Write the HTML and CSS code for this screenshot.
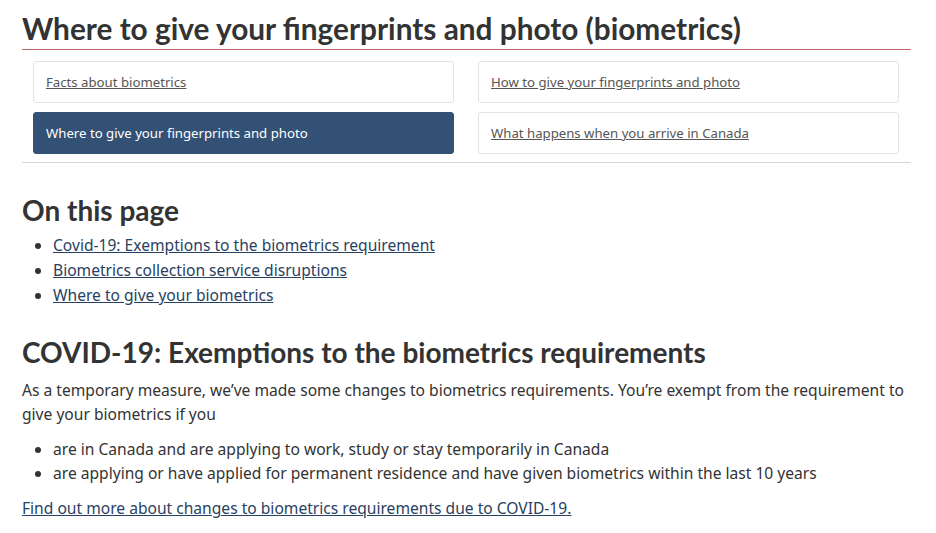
FILE: index.html
```html
<!DOCTYPE html>
<html lang="en">
  <head>
    <meta charset="UTF-8" />
    <meta name="viewport" content="width=device-width, initial-scale=1.0" />
    <title>Where to give your fingerprints and photo (biometrics)</title>
    <link rel="stylesheet" href="styles.css">
  </head>
  <body>
    <main class="container">
      <h1>Where to give your fingerprints and photo (biometrics)</h1>

      <nav class="sub-nav">
        <a href="#" class="nav-box">Facts about biometrics</a>
        <a href="#" class="nav-box">How to give your fingerprints and photo</a>
        <a href="#" class="nav-box active">Where to give your fingerprints and photo</a>
        <a href="#" class="nav-box">What happens when you arrive in Canada</a>
      </nav>

      <h2 class="toc-title">On this page</h2>
      <ul class="toc">
        <li><a href="#covid">Covid-19: Exemptions to the biometrics requirement</a></li>
        <li><a href="#disruptions">Biometrics collection service disruptions</a></li>
        <li><a href="#where">Where to give your biometrics</a></li>
      </ul>

      <h2 id="covid">COVID-19: Exemptions to the biometrics requirements</h2>
      <p>As a temporary measure, we’ve made some changes to biometrics requirements. You’re exempt from the requirement to give your biometrics if you</p>
      <ul class="plain-list">
        <li>are in Canada and are applying to work, study or stay temporarily in Canada</li>
        <li>are applying or have applied for permanent residence and have given biometrics within the last 10 years</li>
      </ul>
      <p><a href="#">Find out more about changes to biometrics requirements due to COVID-19.</a></p>
    </main>
  </body>
</html>
```

FILE: styles.css
```css
body {
  font-family: "Noto Sans", "Open Sans", sans-serif;
  margin: 0;
  padding: 0;
  background-color: #fff;
  color: #333;
}
.container {
  width: 889px;
  margin-left: 22px;
}
h1,
h2 {
  font-family: Lato, "Noto Sans", sans-serif;
  font-weight: 700;
  color: #333;
  margin: 0;
}
h1 {
  font-size: 29.8px;
  line-height: 35px;
  padding-top: 11px;
  padding-bottom: 3px;
  border-bottom: 1px solid #c0656c;
}
.sub-nav {
  display: grid;
  grid-template-columns: 1fr 1fr;
  column-gap: 24px;
  row-gap: 9px;
  padding: 11px 12px 8px 11px;
  border-bottom: 1px solid #d6d6d6;
}
.nav-box {
  display: flex;
  align-items: center;
  height: 40px;
  padding: 0 12px;
  border: 1px solid #e3e3e3;
  border-radius: 3px;
  font-size: 13.2px;
  color: #555;
}
.nav-box.active {
  background-color: #335075;
  border-color: #335075;
  color: #fff;
  text-decoration: none;
}
h2 {
  font-size: 28px;
  line-height: 34px;
}
.toc-title {
  margin-top: 30px;
}
a {
  color: #284162;
}
ul {
  margin: 0;
  padding-left: 31px;
  font-size: 15.6px;
  line-height: 25px;
}
.toc {
  margin-top: 6px;
  margin-bottom: 27px;
}
p {
  font-size: 15.6px;
  line-height: 24px;
  margin: 9px 0 11px;
}
.plain-list {
  line-height: 24px;
  margin-bottom: 11px;
}
```
